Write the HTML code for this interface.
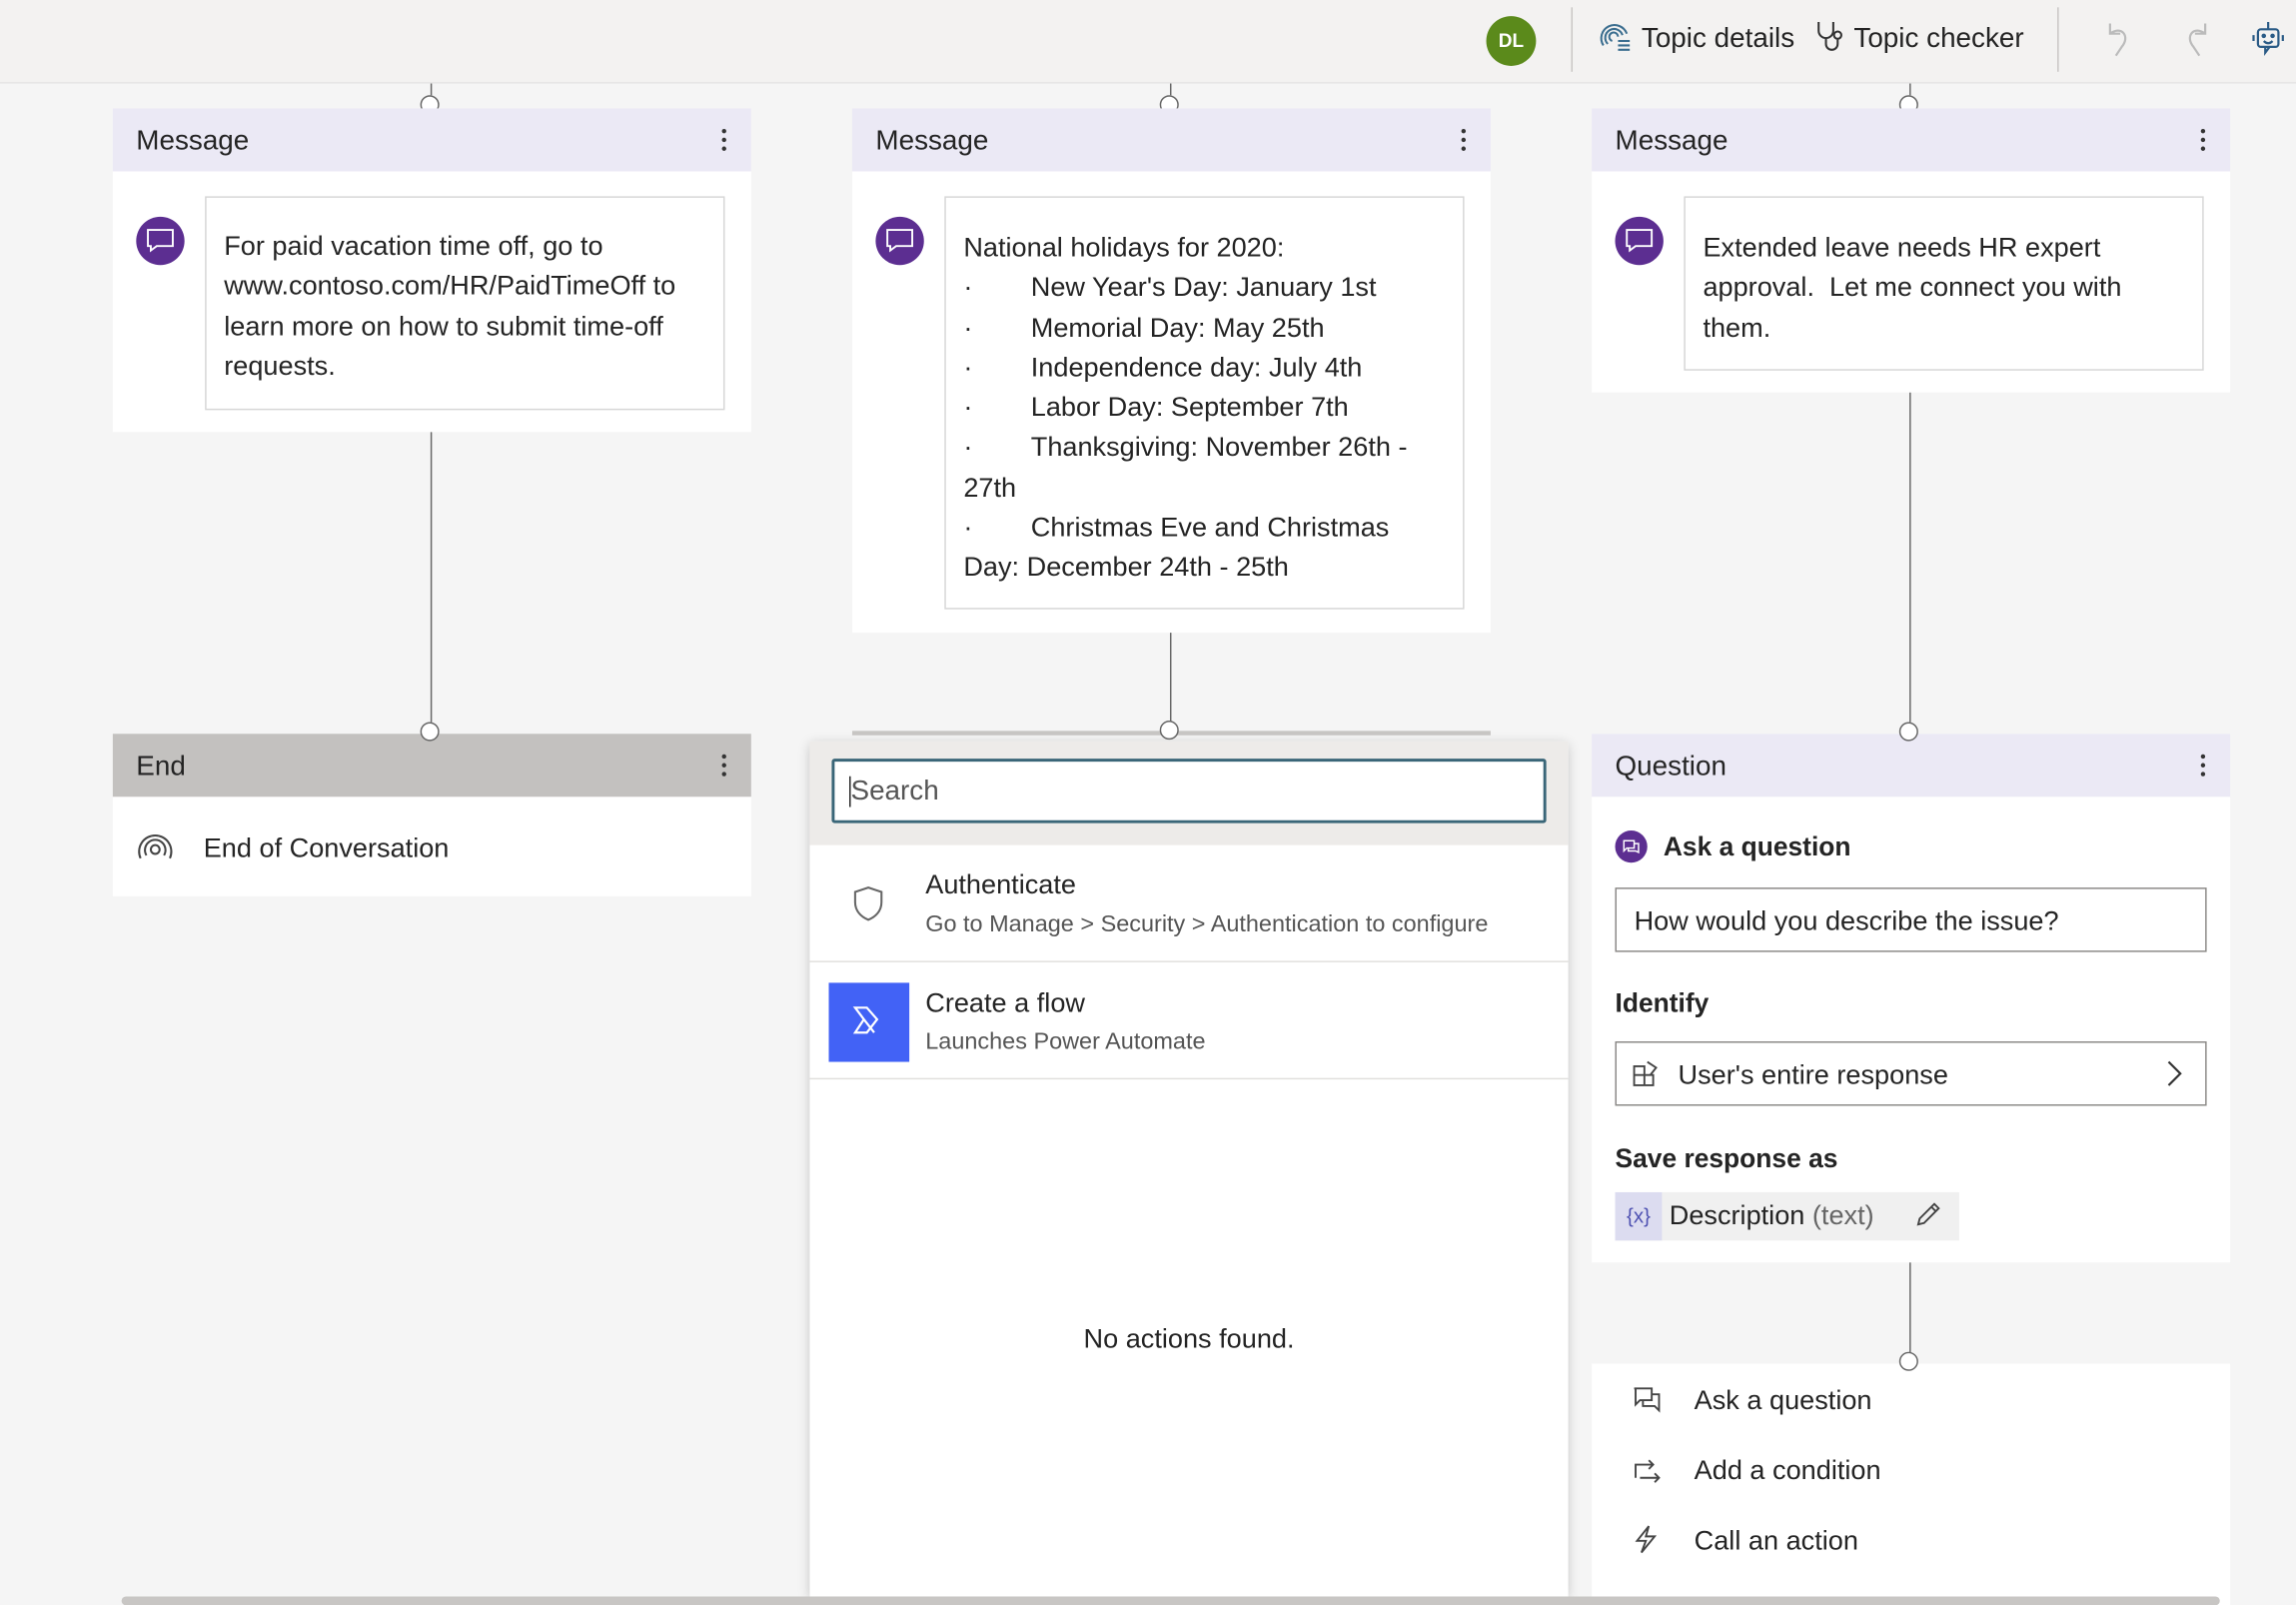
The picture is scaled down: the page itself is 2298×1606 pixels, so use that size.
<!DOCTYPE html>
<html><head><meta charset="utf-8"><style>
*{box-sizing:border-box;margin:0;padding:0}
html,body{width:2298px;height:1606px;overflow:hidden;background:#f3f2f1;font-family:"Liberation Sans",sans-serif;color:#242424}
#w{position:absolute;left:0;top:0;width:1568px;height:1096px;transform:scale(1.46556);transform-origin:0 0;background:#f5f5f5}
.a{position:absolute}
.top{left:0;top:0;width:1568px;height:57px;background:#f3f2f1;border-bottom:1px solid #e6e6e6}
.card{position:absolute;width:436px;background:#fff}
.hd{height:43px;background:#ebe9f5;font-size:19px;padding:12px 16px;position:relative}
.dots{position:absolute;right:16px;top:14px;width:4px;font-size:0}
.dots i{display:block;width:3px;height:3px;border-radius:50%;background:#333;margin:0 0 3px}
.node{position:absolute;width:13px;height:13px;border:1.5px solid #666;border-radius:50%;background:#fff}
.ln{position:absolute;width:1px;background:#666}
.msg{position:absolute;left:63px;top:17px;border:1px solid #d6d6d6;padding:20px 12px 12px 12px;font-size:18.5px;line-height:27.3px}
.bub{position:absolute;left:16px;top:31px;width:33px;height:33px;border-radius:50%;background:#5c2e91}
.bub svg{position:absolute;left:7px;top:8px}
.li{display:flex}.li span:first-child{width:46px}
.t{font-size:18.5px}
</style></head><body><div id="w">
<div class="a top"></div>
<div class="a" style="left:1015px;top:11px;width:34px;height:34px;border-radius:50%;background:#5b8a1b;color:#fff;font-size:13px;font-weight:bold;text-align:center;line-height:34px">DL</div>
<div class="a" style="left:1073px;top:5px;width:1px;height:44px;background:#c8c6c4"></div>
<div class="a" style="left:1405px;top:5px;width:1px;height:44px;background:#c8c6c4"></div>
<svg class="a" style="left:1092px;top:15px" width="24" height="22" viewBox="0 0 24 22" fill="none" stroke="#3b6e8f" stroke-width="1.4"><path d="M3 16A9 9 0 1 1 19 8M6 15A6 6 0 1 1 16 9M9 13a3 3 0 1 1 4-3"/><path d="M13 13h8M13 16h8M13 19h8"/></svg>
<div class="a t" style="left:1121px;top:16px;font-size:19px">Topic details</div>
<svg class="a" style="left:1240px;top:14px" width="22" height="24" viewBox="0 0 22 24" fill="none" stroke="#333" stroke-width="1.4"><path d="M2 1v6a5 5 0 0 0 10 0V1M7 12v4a4 4 0 0 0 8 0v-3"/><circle cx="15" cy="10" r="2.5"/></svg>
<div class="a t" style="left:1266px;top:16px;font-size:19px">Topic checker</div>
<svg class="a" style="left:1435px;top:14px" width="24" height="26" viewBox="0 0 24 26" fill="none" stroke="#bbb" stroke-width="1.5"><path d="M6 2v7h7M6 9c8-6 14 2 8 9l-4 6"/></svg>
<svg class="a" style="left:1488px;top:14px" width="24" height="26" viewBox="0 0 24 26" fill="none" stroke="#bbb" stroke-width="1.5"><path d="M18 2v7h-7M18 9c-8-6-14 2-8 9l4 6"/></svg>
<svg class="a" style="left:1538px;top:14px" width="22" height="26" viewBox="0 0 22 26" fill="none" stroke="#2a5b86" stroke-width="1.5"><path d="M11 1v5"/><rect x="4" y="6" width="14" height="12" rx="2"/><path d="M1 10v4M21 10v4M8 14c2 2 4 2 6 0M9 18v4l3-4"/><circle cx="8" cy="10.5" r=".8"/><circle cx="14" cy="10.5" r=".8"/></svg>

<div class="node" style="left:287px;top:65px"></div><div class="node" style="left:792px;top:65px"></div><div class="node" style="left:1297px;top:65px"></div>
<div class="ln" style="left:294px;top:57px;height:8px"></div><div class="ln" style="left:799px;top:57px;height:8px"></div><div class="ln" style="left:1304px;top:57px;height:8px"></div>

<div class="card" style="left:77px;top:74px;height:221px"><div class="hd">Message<div class="dots"><i></i><i></i><i></i></div></div>
<div style="position:relative"><div class="bub"><svg width="19" height="17" viewBox="0 0 19 17" fill="none" stroke="#fff" stroke-width="1.3"><path d="M1 1h17v11H7l-4 3v-3H1z"/></svg></div><div class="msg" style="width:355px;height:146px;padding-top:19px">For paid vacation time off, go to www.contoso.com/HR/PaidTimeOff to learn more on how to submit time-off requests.</div></div></div>

<div class="card" style="left:582px;top:74px;height:358px"><div class="hd">Message<div class="dots"><i></i><i></i><i></i></div></div>
<div style="position:relative"><div class="bub"><svg width="19" height="17" viewBox="0 0 19 17" fill="none" stroke="#fff" stroke-width="1.3"><path d="M1 1h17v11H7l-4 3v-3H1z"/></svg></div><div class="msg" style="width:355px;height:282px">National holidays for 2020:
<div class="li"><span>·</span><span>New Year's Day: January 1st</span></div>
<div class="li"><span>·</span><span>Memorial Day: May 25th</span></div>
<div class="li"><span>·</span><span>Independence day: July 4th</span></div>
<div class="li"><span>·</span><span>Labor Day: September 7th</span></div>
<div class="li"><span>·</span><span>Thanksgiving: November 26th -</span></div>27th
<div class="li"><span>·</span><span>Christmas Eve and Christmas</span></div>Day: December 24th - 25th</div></div></div>

<div class="card" style="left:1087px;top:74px;height:194px"><div class="hd">Message<div class="dots"><i></i><i></i><i></i></div></div>
<div style="position:relative"><div class="bub"><svg width="19" height="17" viewBox="0 0 19 17" fill="none" stroke="#fff" stroke-width="1.3"><path d="M1 1h17v11H7l-4 3v-3H1z"/></svg></div><div class="msg" style="width:355px;height:119px">Extended leave needs HR expert approval.&nbsp; Let me connect you with them.</div></div></div>

<div class="ln" style="left:294px;top:295px;height:198px"></div>
<div class="ln" style="left:799px;top:432px;height:61px"></div>
<div class="ln" style="left:1304px;top:268px;height:225px"></div>
<div class="a" style="left:582px;top:499px;width:436px;height:3px;background:#c8c6c4"></div>

<div class="card" style="left:77px;top:501px;height:111px"><div class="hd" style="background:#c3c1bf">End<div class="dots"><i></i><i></i><i></i></div></div>
<svg class="a" style="left:16px;top:66px" width="26" height="22" viewBox="0 0 26 22" fill="none" stroke="#444" stroke-width="1.4"><path d="M3 19A11 11 0 1 1 23 19M7 17A7 7 0 1 1 19 17"/><circle cx="13" cy="13" r="3"/></svg>
<div class="a t" style="left:62px;top:67px">End of Conversation</div></div>

<div class="card" style="left:1087px;top:501px;height:361px"><div class="hd">Question<div class="dots"><i></i><i></i><i></i></div></div>
<div class="a" style="left:16px;top:66px;width:22px;height:22px;border-radius:50%;background:#5c2e91"><svg style="position:absolute;left:5px;top:6px" width="12" height="10" viewBox="0 0 12 10" fill="none" stroke="#fff" stroke-width="1"><path d="M1 1h7v5H3l-2 2zM4 6v2h5l2 1V3H8"/></svg></div>
<div class="a t" style="left:49px;top:67px;font-weight:bold;font-size:18px">Ask a question</div>
<div class="a t" style="left:16px;top:105px;width:404px;height:44px;border:1px solid #8a8886;padding:11px 12px">How would you describe the issue?</div>
<div class="a t" style="left:16px;top:174px;font-weight:bold;font-size:18px">Identify</div>
<div class="a t" style="left:16px;top:210px;width:404px;height:44px;border:1px solid #8a8886;padding:11px 42px">User's entire response</div>
<svg class="a" style="left:28px;top:223px" width="18" height="18" viewBox="0 0 18 18" fill="none" stroke="#444" stroke-width="1.3"><path d="M1 4h7v13H1zM1 10h13v7H8M10 1l6 4-4 5"/></svg>
<svg class="a" style="left:392px;top:223px" width="12" height="18" viewBox="0 0 12 18" fill="none" stroke="#333" stroke-width="1.5"><path d="M2 1l8 8-8 8"/></svg>
<div class="a t" style="left:16px;top:280px;font-weight:bold;font-size:18px">Save response as</div>
<div class="a" style="left:16px;top:313px;width:235px;height:33px;background:#f0f0f0"></div>
<div class="a" style="left:16px;top:313px;width:32px;height:33px;background:#dcdcf0;color:#4f52b2;font-size:14px;text-align:center;line-height:33px">{x}</div>
<div class="a t" style="left:53px;top:318px">Description <span style="color:#666">(text)</span></div>
<svg class="a" style="left:220px;top:318px" width="20" height="20" viewBox="0 0 20 20" fill="none" stroke="#444" stroke-width="1.3"><path d="M3 17l1-4L14 3l3 3L7 16zM12 5l3 3"/></svg>
</div>

<div class="ln" style="left:1304px;top:862px;height:62px"></div>
<div class="card" style="left:1087px;top:931px;height:165px">
<svg class="a" style="left:28px;top:16px" width="20" height="18" viewBox="0 0 20 18" fill="none" stroke="#444" stroke-width="1.3"><path d="M1 1h12v8H5l-3 3V1zM7 9v4h8l3 3V5h-5"/></svg>
<div class="a t" style="left:70px;top:14px">Ask a question</div>
<svg class="a" style="left:28px;top:64px" width="20" height="18" viewBox="0 0 20 18" fill="none" stroke="#444" stroke-width="1.3"><path d="M2 14V5h12M11 2l3 3-3 3M5 14h13M15 11l3 3-3 3"/></svg>
<div class="a t" style="left:70px;top:62px">Add a condition</div>
<svg class="a" style="left:28px;top:110px" width="18" height="20" viewBox="0 0 18 20" fill="none" stroke="#444" stroke-width="1.3"><path d="M11 1L3 11h6l-3 8 9-11H9z"/></svg>
<div class="a t" style="left:70px;top:110px">Call an action</div></div>

<div class="node" style="left:1297px;top:923px"></div>
<div class="node" style="left:287px;top:493px"></div><div class="node" style="left:1297px;top:493px"></div>

<div class="a" style="left:553px;top:506px;width:518px;height:584px;background:#fff;box-shadow:0 2px 8px rgba(0,0,0,.2)">
<div class="a" style="left:0;top:0;width:518px;height:71px;background:#edebe9"></div>
<div class="a" style="left:15px;top:12px;width:488px;height:44px;border:2.5px solid #3a6678;border-radius:2px;background:#fff;font-size:19px;padding:10px 10px;color:#555"><span style="border-left:1px solid #222">Search</span></div>
<svg class="a" style="left:29px;top:99px" width="22" height="24" viewBox="0 0 22 24" fill="none" stroke="#666" stroke-width="1.4"><path d="M11 1L2 4v7c0 6 4 10 9 12 5-2 9-6 9-12V4z"/></svg>
<div class="a t" style="left:79px;top:87px">Authenticate</div>
<div class="a" style="left:79px;top:117px;font-size:16px;color:#555">Go to Manage &gt; Security &gt; Authentication to configure</div>
<div class="a" style="left:0;top:150px;width:518px;height:1px;background:#e1dfdd"></div>
<div class="a" style="left:13px;top:165px;width:55px;height:54px;background:#4262f6"></div>
<svg class="a" style="left:29px;top:179px" width="22" height="24" viewBox="0 0 22 24" fill="none" stroke="#fff" stroke-width="1.5"><path d="M2 3h8l7 8-7 9H2l6-9zM8 11l7 9"/></svg>
<div class="a t" style="left:79px;top:168px">Create a flow</div>
<div class="a" style="left:79px;top:197px;font-size:16px;color:#555">Launches Power Automate</div>
<div class="a" style="left:0;top:230px;width:518px;height:1px;background:#e1dfdd"></div>
<div class="a t" style="left:0;top:397px;width:518px;text-align:center">No actions found.</div>
</div>
<div class="node" style="left:792px;top:492px"></div>
<div class="a" style="left:83px;top:1090px;width:1433px;height:6px;background:#c8c6c4;border-radius:3px"></div>
</div></body></html>
